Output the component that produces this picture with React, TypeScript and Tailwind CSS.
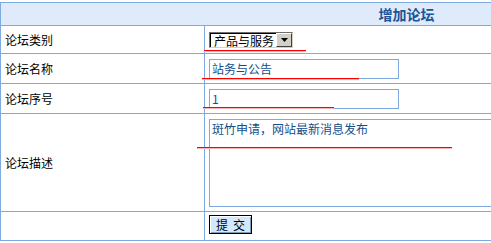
const BORDER = "border-[#7eaadf]";

function RedMark({ className }: { className: string }) {
  // hand-drawn red underline annotation laid over the form
  return (
    <div className={`pointer-events-none absolute h-[2px] ${className}`}>
      <div className="h-[1px] bg-[#ff0000]" />
      <div className="h-[1px] bg-[#ffb4b4]" />
    </div>
  );
}

function Row({
  label,
  height,
  children,
}: {
  label?: string;
  height: string;
  children: React.ReactNode;
}) {
  return (
    <div className={`flex border-b ${BORDER} ${height}`}>
      <div
        className={`flex w-[204px] shrink-0 items-center border-r ${BORDER} pl-[4px] text-[12px] text-black`}
      >
        {label}
      </div>
      <div className="flex-1 pl-[4px]">{children}</div>
    </div>
  );
}

export default function App() {
  return (
    <div
      className="relative h-[243px] w-[491px] overflow-hidden bg-white"
      style={{ fontFamily: '"Noto Sans CJK SC", "Liberation Sans", sans-serif' }}
    >
      <div className={`mt-[2px] w-[812px] border-l border-t ${BORDER}`}>
        {/* Header */}
        <div
          className={`flex h-[23px] items-center justify-center border-b ${BORDER} bg-[#dfeafb] text-[14px] font-bold text-[#1a5596]`}
        >
          增加论坛
        </div>

        <Row label="论坛类别" height="h-[28px]">
          <div className="mt-[6px] flex h-[16px] w-[84px] items-stretch border-b border-l border-r border-t border-b-[#d4d0c8] border-l-[#6f6f6f] border-r-[#d4d0c8] border-t-[#6f6f6f] bg-white">
            <div className="flex flex-1 items-center border-l border-t border-l-black border-t-black pl-[3px] text-[12px] leading-none text-black">
              产品与服务
            </div>
            <div className="flex w-[16px] items-center justify-center border-b border-l border-r border-t border-b-[#404040] border-l-white border-r-[#404040] border-t-white bg-[#d4d0c8]">
              <svg width="7" height="4" viewBox="0 0 7 4">
                <path d="M0 0h7L3.5 4z" fill="#000" />
              </svg>
            </div>
          </div>
        </Row>

        <Row label="论坛名称" height="h-[30px]">
          <div
            className={`mt-[5px] flex h-[20px] w-[190px] items-center border ${BORDER} pl-[2px] text-[12px] text-[#124f8c]`}
          >
            站务与公告
          </div>
        </Row>

        <Row label="论坛序号" height="h-[30px]">
          <div
            className={`mt-[5px] flex h-[20px] w-[190px] items-center border ${BORDER} pl-[2px] text-[12px] text-[#124f8c]`}
          >
            1
          </div>
        </Row>

        <Row label="论坛描述" height="h-[98px]">
          <div
            className={`mt-[5px] h-[88px] w-[400px] border ${BORDER} pl-[2px] pt-[1px] text-[12px] leading-[16px] text-[#124f8c]`}
          >
            斑竹申请，网站最新消息发布
          </div>
        </Row>

        <Row height="h-[29px]">
          <button className="mt-[3px] flex h-[19px] w-[43px] items-center justify-center gap-[5px] border border-black bg-[#d2e8ff] text-[12px] leading-none text-black shadow-[inset_1px_1px_0_#ffffff,inset_-1px_-1px_0_#7f9db9]">
            <span>提</span>
            <span>交</span>
          </button>
        </Row>
      </div>

      <RedMark className="left-[204px] top-[50px] w-[102px]" />
      <RedMark className="left-[202px] top-[78px] w-[157px]" />
      <RedMark className="left-[203px] top-[107px] w-[131px]" />
      <RedMark className="left-[197px] top-[147px] w-[255px]" />
    </div>
  );
}
